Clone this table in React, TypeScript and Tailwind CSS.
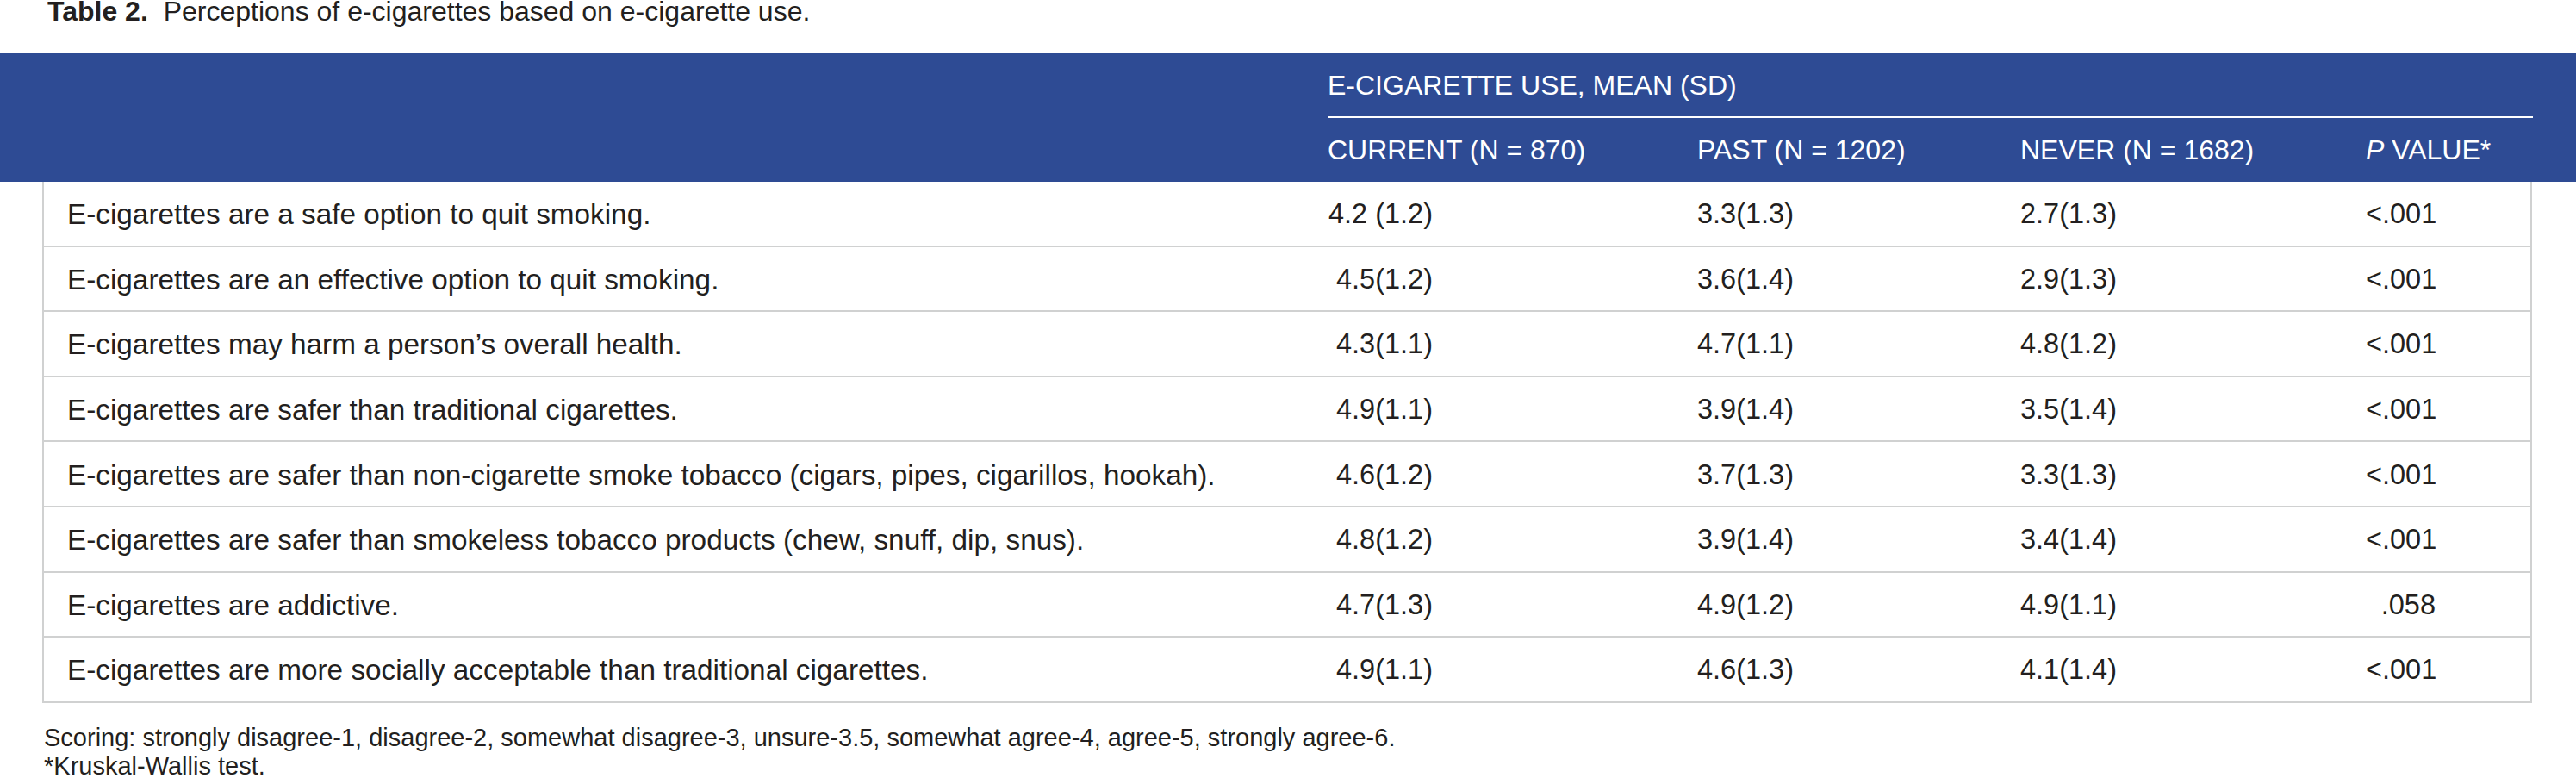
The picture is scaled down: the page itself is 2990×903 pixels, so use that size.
import React from "react";

const rows: [string, string, string, string, string][] = [
  ["E-cigarettes are a safe option to quit smoking.", "4.2 (1.2)", "3.3(1.3)", "2.7(1.3)", "<.001"],
  ["E-cigarettes are an effective option to quit smoking.", "4.5(1.2)", "3.6(1.4)", "2.9(1.3)", "<.001"],
  ["E-cigarettes may harm a person’s overall health.", "4.3(1.1)", "4.7(1.1)", "4.8(1.2)", "<.001"],
  ["E-cigarettes are safer than traditional cigarettes.", "4.9(1.1)", "3.9(1.4)", "3.5(1.4)", "<.001"],
  [
    "E-cigarettes are safer than non-cigarette smoke tobacco (cigars, pipes, cigarillos, hookah).",
    "4.6(1.2)",
    "3.7(1.3)",
    "3.3(1.3)",
    "<.001",
  ],
  [
    "E-cigarettes are safer than smokeless tobacco products (chew, snuff, dip, snus).",
    "4.8(1.2)",
    "3.9(1.4)",
    "3.4(1.4)",
    "<.001",
  ],
  ["E-cigarettes are addictive.", "4.7(1.3)", "4.9(1.2)", "4.9(1.1)", ".058"],
  [
    "E-cigarettes are more socially acceptable than traditional cigarettes.",
    "4.9(1.1)",
    "4.6(1.3)",
    "4.1(1.4)",
    "<.001",
  ],
];

export default function App() {
  return (
    <div
      className="w-[2990px] h-[903px] bg-white text-[#231f20] overflow-hidden"
      style={{ fontFamily: '"Liberation Sans", Arial, Helvetica, sans-serif' }}
    >
      {/* Title */}
      <div className="h-[61px] pl-[55px] text-[32px] leading-[26px] whitespace-nowrap">
        <span className="font-bold">Table 2.</span>
        <span className="ml-[9px]"> Perceptions of e-cigarettes based on e-cigarette use.</span>
      </div>

      {/* Blue header */}
      <div className="h-[150px] bg-[#2e4b94] text-white text-[32px] leading-[32px] pt-[22px] pr-[50px]">
        <div className="grid grid-cols-[1541px_1fr]">
          <div />
          <div className="whitespace-nowrap">E-CIGARETTE USE, MEAN (SD)</div>
        </div>
        <div className="grid grid-cols-[1541px_1fr] mt-[20px]">
          <div />
          <div className="h-[2px] bg-white" />
        </div>
        <div className="grid grid-cols-[1541px_429px_375px_401px_1fr] mt-[21px] whitespace-nowrap">
          <div />
          <div>CURRENT (N = 870)</div>
          <div>PAST (N = 1202)</div>
          <div>NEVER (N = 1682)</div>
          <div>
            <span className="italic">P</span> VALUE*
          </div>
        </div>
      </div>

      {/* Body */}
      <div className="ml-[49px] w-[2890px] border-l-2 border-r-2 border-[#d0d1d1] text-[32.5px] leading-[33px]">
        {rows.map((r, i) => (
          <div
            key={i}
            className="grid grid-cols-[1490px_429px_375px_401px_1fr] items-center h-[75.6px] pt-[2px] border-b-2 border-[#d0d1d1] whitespace-nowrap"
          >
            <div className="pl-[27px] text-[33.3px]">{r[0]}</div>
            <div>
              <div className="w-[122px] text-right">{r[1]}</div>
            </div>
            <div>{r[2]}</div>
            <div>{r[3]}</div>
            <div>
              <div className="w-[81px] text-right">{r[4]}</div>
            </div>
          </div>
        ))}
      </div>

      {/* Footnotes */}
      <div className="mt-[24px] pl-[51px] text-[29px] leading-[33.5px] whitespace-nowrap">
        <div>
          Scoring: strongly disagree-1, disagree-2, somewhat disagree-3, unsure-3.5, somewhat agree-4, agree-5, strongly
          agree-6.
        </div>
        <div>*Kruskal-Wallis test.</div>
      </div>
    </div>
  );
}
